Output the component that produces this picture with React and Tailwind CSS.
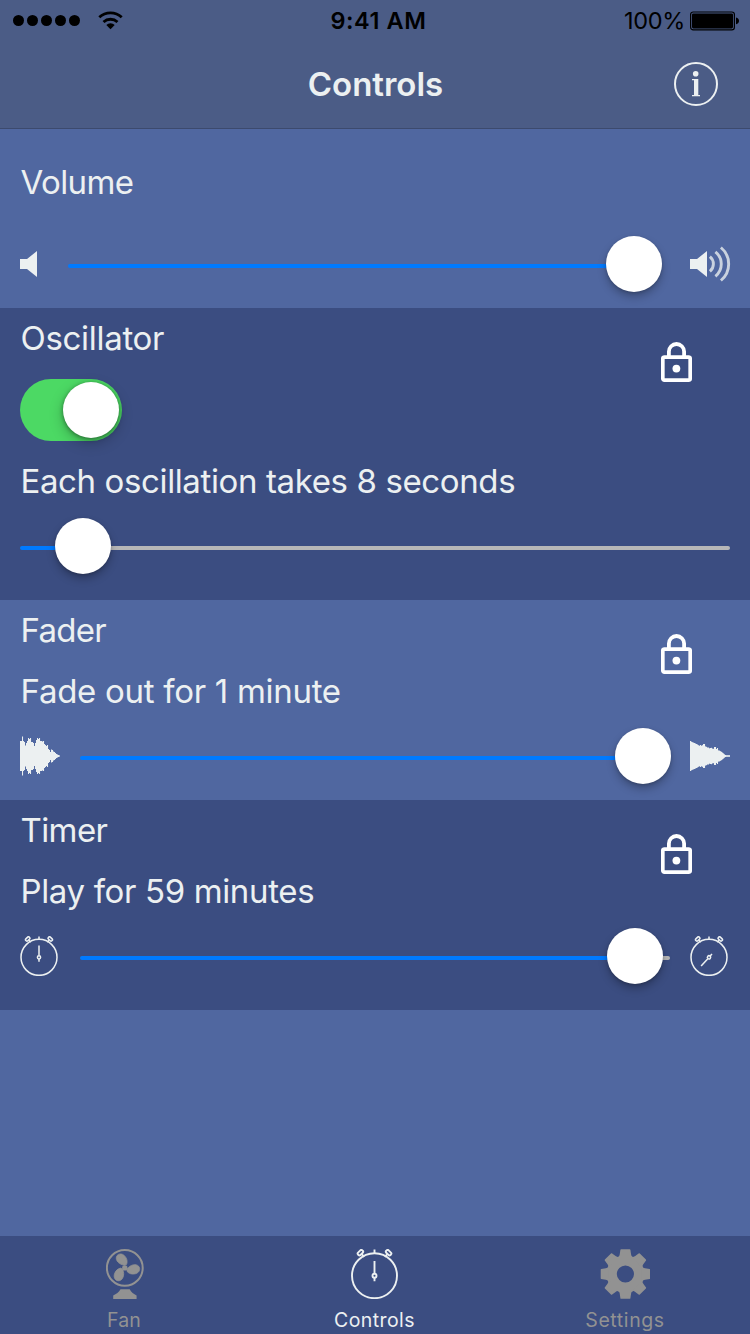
import React from "react";

const FONT = "font-['Inter','Liberation_Sans',sans-serif]";

function Label({ children, className = "", tracking = "tracking-[-0.36px]" }) {
  return (
    <div className={`flex h-10 items-center whitespace-nowrap pl-[0.5px] text-[33px] leading-10 text-[#ecf0f1] ${tracking} ${className}`}>
      <span>{children}</span>
    </div>
  );
}

function Slider({ className = "", thumb, fill }) {
  return (
    <div className={`relative flex h-14 items-center pt-1 ${className}`}>
      <div className="h-1 shrink-0 rounded-l-full bg-[#007aff]" style={{ width: fill }} />
      <div className="h-1 flex-1 rounded-r-full bg-[#b7b7b7]" />
      <div
        className="absolute top-0 size-14 rounded-full bg-white shadow-[0_5px_9px_rgba(0,0,0,0.25),0_1px_3px_rgba(0,0,0,0.18)]"
        style={{ left: thumb }}
      />
    </div>
  );
}

function Lock() {
  return (
    <svg width="31" height="40" viewBox="0 0 31 40" fill="none" stroke="white" className="shrink-0">
      <rect x="1.8" y="15.2" width="27.4" height="22.9" rx="1.6" strokeWidth="3.7" />
      <path d="M7.9 15V9.6a7.6 7.6 0 0 1 15.2 0V15" strokeWidth="3.8" />
      <circle cx="15.4" cy="26.6" r="3.9" fill="white" stroke="none" />
    </svg>
  );
}

function Speaker({ loud }) {
  return (
    <svg width={loud ? 41 : 18} height="36" viewBox={loud ? "0 0 41 36" : "0 0 18 36"} fill="none" className="shrink-0">
      <path d="M0 13h7L17 5v26L7 23H0z" fill="#ecf0f1" />
      {loud && (
        <g stroke="#ecf0f1" strokeWidth="2.9" opacity="0.78">
          <path d="M19.9 10.6a9.6 9.6 0 0 1 0 14.8" />
          <path d="M25.4 5.9a15.6 15.6 0 0 1 0 24.4" />
          <path d="M30.9 1.5a21.4 21.4 0 0 1 0 33" />
        </g>
      )}
    </svg>
  );
}

const WAVE_START = [15, 15, 19.5, 15, 14, 10.5, 13, 15, 18, 17, 18, 14, 14, 13, 10, 13, 16, 18, 17, 18, 15, 15, 14.5, 15, 12, 11, 10, 11, 7, 6, 4, 6.5, 6, 4.5, 4, 3, 2, 1.5, 1, 0.6];
const WAVE_END = [15, 14.3, 13.8, 13.4, 13, 12.5, 12, 11.5, 10.8, 10.3, 11, 10.3, 10.8, 12, 12, 9.6, 9.2, 8.5, 8.5, 7.7, 8, 8.2, 7.4, 7.2, 9, 9, 7, 8, 5.6, 5.4, 4.8, 4.2, 3.4, 2.6, 1.7, 1, 0.8, 0.8, 0.8, 0.8];

function Wave({ data }) {
  return (
    <svg width="40" height="40" viewBox="0 0 40 40" fill="#ecf0f1" className="shrink-0">
      {data.map((h, i) => (
        <rect key={i} x={i} y={20 - h} width="1.05" height={h * 2} />
      ))}
    </svg>
  );
}

function Stopwatch({ width, height, stroke = 1.9, angle = 0, className = "" }) {
  return (
    <svg width={width} height={height} viewBox="0 0 47 50" fill="none" stroke="#ecf0f1" strokeWidth={stroke} className={`shrink-0 ${className}`}>
      <circle cx="23.5" cy="26.7" r="22.5" />
      <path d="M23.5 .5V4.5M11 5.2l2 2.8M36 5.2l-2 2.8" />
      <rect x="6.4" y="2" width="6" height="3.4" rx="1.4" transform="rotate(-45 9.4 3.7)" />
      <rect x="34.6" y="2" width="6" height="3.4" rx="1.4" transform="rotate(45 37.6 3.7)" />
      <g transform={`rotate(${angle} 23.5 26.7)`}>
        <circle cx="23.5" cy="26.7" r="2" />
        <path d="M23.5 12V24.5M23.5 28.8V32.3" />
      </g>
    </svg>
  );
}

function Fan() {
  const blade = "M18.4 16.3C12.8 15.6 9.2 11.2 10.5 7.6 11.8 4.3 16 4.1 18.5 6.7 21.2 9.4 21.7 12.8 20.6 15.4z";
  return (
    <svg width="38" height="51" viewBox="0 0 38 51" fill="#929292" className="shrink-0">
      <circle cx="18.8" cy="18.9" r="17.9" fill="none" stroke="#929292" strokeWidth="2" />
      <circle cx="18.8" cy="18.9" r="2.7" />
      <g stroke="#929292" strokeWidth="0.7" strokeLinejoin="round">
        <path d={blade} />
        <path d={blade} transform="rotate(120 18.8 18.9)" />
        <path d={blade} transform="rotate(240 18.8 18.9)" />
      </g>
      <path d="M14.5 40.3h9.2c1.3 3.3 4.2 4.4 6.9 6.3v3.4H7.2v-3.4c2.9-1.9 5.9-3 7.3-6.3z" />
    </svg>
  );
}

function Gear() {
  return (
    <svg width="50" height="50" viewBox="-25.4 -25 50 50" className="shrink-0">
      <circle r="13.7" fill="none" stroke="#929292" strokeWidth="10.2" />
      {[0, 45, 90, 135, 180, 225, 270, 315].map((a) => (
        <path key={a} d="M-7.2-16.5Q-5.9-18-5.7-19.6L-5-24.2Q-4.9-24.7-4.3-24.7H4.3Q4.9-24.7 5-24.2L5.7-19.6Q5.9-18 7.2-16.5z" fill="#929292" transform={`rotate(${a})`} />
      ))}
    </svg>
  );
}

function StatusBar() {
  return (
    <div className="flex h-[41px] items-center text-black">
      <div className="flex w-[330.5px] items-center pl-[13px]">
        <div className="flex gap-[3px]">
          {[0, 1, 2, 3, 4].map((i) => (
            <div key={i} className="size-[11px] rounded-full bg-black" />
          ))}
        </div>
        <svg width="25" height="19" viewBox="0 0 25 19" fill="none" stroke="black" strokeWidth="2.8" className="mb-px ml-[18px]">
          <path d="M1.3 6.3a16.2 16.2 0 0 1 22.4 0" />
          <path d="M5.5 11a10.3 10.3 0 0 1 14 0" />
          <path d="M12.5 18.2L8.3 13.9a6 6 0 0 1 8.4 0z" fill="black" stroke="none" />
        </svg>
      </div>
      <div className="w-[293.5px] whitespace-nowrap pt-px text-[23.5px] font-semibold leading-10 tracking-[0.55px]">9:41 AM</div>
      <div className="w-[66px] whitespace-nowrap pt-px text-[23.5px] leading-10 tracking-[-0.3px]">100%</div>
      <svg width="50" height="20" viewBox="0 0 50 20" fill="none" className="shrink-0">
        <rect x=".6" y="1" width="43.8" height="17.8" rx="2.6" stroke="black" strokeWidth="1.2" />
        <rect x="2" y="2.4" width="41" height="15" rx="1.4" fill="black" />
        <path d="M46 6.5c4 .8 4 6 0 6.8z" fill="black" />
      </svg>
    </div>
  );
}

function Header() {
  return (
    <header className="flex h-[129px] flex-col border-b border-[#3c4a6e] bg-[#4b5c86]">
      <StatusBar />
      <div className="grid h-[86px] grid-cols-[1fr_auto_1fr] items-center">
        <div />
        <h1 className="whitespace-nowrap pl-px text-[33px] font-semibold leading-10 text-[#ecf0f1]">Controls</h1>
        <svg width="44" height="44" viewBox="0 0 44 44" className="mr-8 justify-self-end" fill="#ecf0f1">
          <circle cx="22" cy="22" r="21" fill="none" stroke="#ecf0f1" strokeWidth="2" />
          <circle cx="21.7" cy="11.7" r="2.8" />
          <path d="M18 17h6.3v16H26v1.2h-8V33h2V18.3h-2z" />
        </svg>
      </div>
    </header>
  );
}

function Tab({ icon, label, active, className = "" }) {
  return (
    <div className={`flex w-[250px] flex-col items-center pt-3 ${active ? "text-[#ecf0f1]" : "text-[#929292]"}`}>
      <div className="flex h-[52px] items-center">{icon}</div>
      <div className={`mt-2 whitespace-nowrap text-[19.5px] leading-6 ${className}`}>{label}</div>
    </div>
  );
}

export default function App() {
  return (
    <div className={`flex h-[1334px] w-[750px] flex-col overflow-hidden bg-[#5067a0] ${FONT}`}>
      <Header />

      <section className="h-[179px] px-5 pt-[33px]">
        <Label tracking="tracking-[-0.6px]">Volume</Label>
        <div className="mt-[34px] flex items-center">
          <Speaker />
          <Slider className="ml-[30px] w-[594px] shrink-0" thumb="538px" fill="566px" />
          <div className="-mr-px ml-7 shrink-0">
            <Speaker loud />
          </div>
        </div>
      </section>

      <section className="h-[292px] bg-[#3b4d81] px-5 pt-[10px]">
        <div className="flex justify-between pr-[38px]">
          <Label tracking="tracking-[-0.3px]">Oscillator</Label>
          <div className="mt-6 h-10"><Lock /></div>
        </div>
        <div className="mt-[-3px] flex h-[62px] w-[102px] items-center justify-end rounded-full bg-[#4cd964] pr-[3px]">
          <div className="size-14 rounded-full bg-white shadow-[0_5px_14px_rgba(0,0,0,0.25),0_1px_4px_rgba(0,0,0,0.4)]" />
        </div>
        <Label className="mt-5" tracking="tracking-[-0.38px]">Each oscillation takes 8 seconds</Label>
        <Slider className="mt-[17px] w-[710px]" thumb="35px" fill="60px" />
      </section>

      <section className="h-[200px] px-5 pt-[10px]">
        <div className="flex justify-between pr-[38px]">
          <Label tracking="tracking-[-0.7px]">Fader</Label>
          <div className="mt-6 h-10"><Lock /></div>
        </div>
        <Label className="mt-[-3px]" tracking="tracking-[-0.29px]">Fade out for 1 minute</Label>
        <div className="mt-[17px] flex items-center">
          <Wave data={WAVE_START} />
          <Slider className="ml-5 w-[590px]" thumb="535px" fill="563px" />
          <div className="ml-5"><Wave data={WAVE_END} /></div>
        </div>
      </section>

      <section className="h-[210px] bg-[#3b4d81] px-5 pt-[10px]">
        <div className="flex justify-between pr-[38px]">
          <Label tracking="tracking-[-0.6px]">Timer</Label>
          <div className="mt-6 h-10"><Lock /></div>
        </div>
        <Label className="mt-[-3px]">Play for 59 minutes</Label>
        <div className="mt-[17px] flex items-center">
          <Stopwatch width={38} height={40} />
          <Slider className="ml-[22px] w-[590px]" thumb="527px" fill="555px" />
          <div className="ml-5"><Stopwatch width={38} height={40} angle={222} /></div>
        </div>
      </section>

      <div className="flex-1" />

      <nav className="flex h-[98px] bg-[#3b4d81]">
        <Tab icon={<Fan />} label="Fan" className="mr-[2px] tracking-[0.2px]" />
        <Tab icon={<Stopwatch width={47} height={50} className="mr-[2px]" />} label="Controls" active className="mr-px tracking-[0.4px]" />
        <Tab icon={<Gear />} label="Settings" className="tracking-[0.6px]" />
      </nav>
    </div>
  );
}
